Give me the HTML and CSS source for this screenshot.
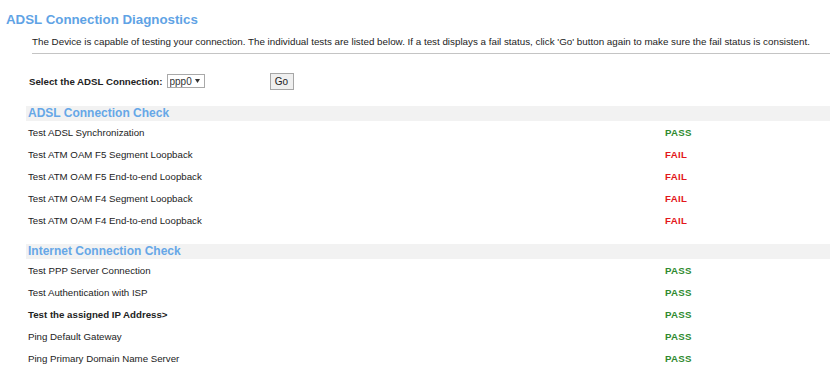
FILE: index.html
```html
<!DOCTYPE html>
<html lang="en">
<head>
    <meta charset="UTF-8">
    <title>ADSL Connection Diagnostics</title>
    <link rel="stylesheet" href="styles.css">
</head>
<body>
    <h1 class="title">ADSL Connection Diagnostics</h1>
    <p class="intro">The Device is capable of testing your connection. The individual tests are listed below. If a test displays a fail status, click 'Go' button again to make sure the fail status is consistent.</p>
    <hr class="rule">

    <!--connection select-->
    <form class="pick">
        <label class="pick-label" for="conn">Select the ADSL Connection:</label>
        <select class="pick-select" id="conn">
            <option>ppp0</option>
        </select>
        <button type="button" class="go">Go</button>
    </form>

    <!--adsl check-->
    <div class="check">
        <div class="band">ADSL Connection Check</div>
        <div class="row"><span>Test ADSL Synchronization</span><span class="pass">PASS</span></div>
        <div class="row"><span>Test ATM OAM F5 Segment Loopback</span><span class="fail">FAIL</span></div>
        <div class="row"><span>Test ATM OAM F5 End-to-end Loopback</span><span class="fail">FAIL</span></div>
        <div class="row"><span>Test ATM OAM F4 Segment Loopback</span><span class="fail">FAIL</span></div>
        <div class="row"><span>Test ATM OAM F4 End-to-end Loopback</span><span class="fail">FAIL</span></div>
    </div>

    <!--internet check-->
    <div class="check">
        <div class="band">Internet Connection Check</div>
        <div class="row"><span>Test PPP Server Connection</span><span class="pass">PASS</span></div>
        <div class="row"><span>Test Authentication with ISP</span><span class="pass">PASS</span></div>
        <div class="row"><span class="strong">Test the assigned IP Address&gt;</span><span class="pass">PASS</span></div>
        <div class="row"><span>Ping Default Gateway</span><span class="pass">PASS</span></div>
        <div class="row"><span>Ping Primary Domain Name Server</span><span class="pass">PASS</span></div>
    </div>
</body>
</html>
```

FILE: styles.css
```css
*{
    margin: 0;
    padding: 0;
    box-sizing: border-box;
}

body{
    font-family: "Liberation Sans", Arial, sans-serif;
    color: #222;
    background-color: #fff;
    overflow: hidden;
}

.title{
    font-size: 13.3px;
    font-weight: bold;
    color: #5fa3e5;
    padding: 12px 0 0 6px;
    line-height: 16px;
}

.intro{
    font-size: 9.8px;
    line-height: 12px;
    padding: 8px 0 0 32px;
    white-space: nowrap;
}

.rule{
    border: 0;
    border-top: 1px solid #c4c4c4;
    margin: 5px 0 0 32px;
}

.pick{
    display: flex;
    align-items: center;
    padding: 17px 0 0 29px;
    height: 37px;
}

.pick-label{
    font-size: 9.7px;
    font-weight: bold;
}

.pick-select{
    appearance: none;
    -webkit-appearance: none;
    margin-left: 4px;
    width: 38px;
    height: 14px;
    border: 1px solid #a9a9a9;
    border-radius: 0;
    padding-left: 2px;
    font-family: "Liberation Sans", Arial, sans-serif;
    font-size: 10px;
    color: #333;
    background: #fff url("data:image/svg+xml;utf8,<svg xmlns='http://www.w3.org/2000/svg' width='5' height='4'><path d='M0 0h5L2.5 4z' fill='%23333'/></svg>") no-repeat right 4px center;
}

.go{
    margin-left: 65px;
    width: 24px;
    height: 17px;
    border: 1px solid #a6a6a6;
    background-color: #efefef;
    font-family: "Liberation Sans", Arial, sans-serif;
    font-size: 10px;
    color: #222;
}

.check{
    margin: 15px 0 0 26px;
}

.check + .check{
    margin-top: 13px;
}

.band{
    height: 15px;
    line-height: 15px;
    padding-left: 2px;
    background-color: #f2f2f2;
    font-size: 12px;
    font-weight: bold;
    color: #66a7e7;
}

.row{
    display: grid;
    grid-template-columns: 637px auto;
    align-items: center;
    height: 22px;
    padding-left: 2px;
    font-size: 9.7px;
}

.strong{
    font-weight: bold;
}

.pass,
.fail{
    font-weight: bold;
    letter-spacing: 0.3px;
}

.pass{
    color: #2f8a2f;
}

.fail{
    color: #e3161c;
}
```
